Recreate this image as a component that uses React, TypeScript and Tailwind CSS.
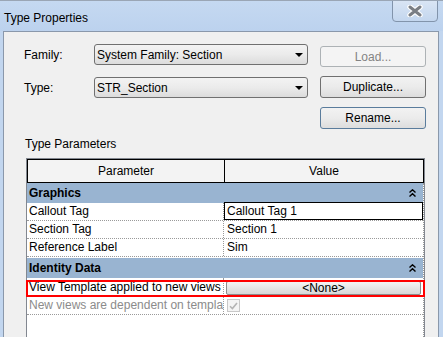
const font = "font-['Liberation_Sans',Arial,sans-serif]"

function Combo({ text }: { text: string }) {
  return (
    <div className="flex h-[21px] w-[214px] items-center justify-between rounded-[3px] border border-[#707070] bg-gradient-to-b from-[#f3f3f3] via-[#ebebeb] to-[#dcdcdc] pl-[2px] pr-[4px] text-[12px] text-black">
      <span>{text}</span>
      <svg width="8" height="4" viewBox="0 0 8 4">
        <path d="M0 0h8L4 4z" fill="#000" />
      </svg>
    </div>
  )
}

function Btn({ label, disabled, focus }: { label: string; disabled?: boolean; focus?: boolean }) {
  if (disabled) {
    return (
      <div className="flex h-[21px] w-[106px] items-center justify-center rounded-[3px] border border-[#adb2b5] bg-[#f4f4f4] text-[12px] text-[#838383]">
        {label}
      </div>
    )
  }
  return (
    <div
      className={
        "flex h-[22px] w-[106px] items-center justify-center rounded-[3px] border bg-gradient-to-b from-[#f2f2f2] via-[#ebebeb] to-[#dddddd] text-[12px] text-black " +
        (focus ? "border-[#5a7c9c]" : "border-[#707070]")
      }
    >
      {label}
    </div>
  )
}

function Chevrons() {
  return (
    <svg width="7" height="8" viewBox="0 0 7 8" className="mr-[7px]">
      <path d="M0.5 3.5L3.5 0.8L6.5 3.5M0.5 7.5L3.5 4.8L6.5 7.5" stroke="#000" strokeWidth="1.4" fill="none" />
    </svg>
  )
}

function Group({ label }: { label: string }) {
  return (
    <div className="flex h-[20px] items-center justify-between bg-[#99b4d1] pl-[2px] text-[12px] font-bold text-black">
      <span>{label}</span>
      <Chevrons />
    </div>
  )
}

function Row({ name, value, selected }: { name: string; value: string; selected?: boolean }) {
  return (
    <div className="flex h-[18px] border-b border-dotted border-[#9a9a9a] text-[12px] text-black">
      <div className="w-[197px] overflow-hidden whitespace-nowrap border-r border-dotted border-[#9a9a9a] pl-[2px] leading-[17px]">
        {name}
      </div>
      <div className="flex-1">
        {selected ? (
          <div className="-mt-[1px] h-[18px] border border-black pl-[2px] leading-[16px]">{value}</div>
        ) : (
          <div className="pl-[3px] leading-[17px]">{value}</div>
        )}
      </div>
    </div>
  )
}

export default function App() {
  return (
    <div className={`${font} flex h-[337px] w-[443px] flex-col overflow-hidden border-t border-[#9aa6b5] bg-[#c2d6ef]`}>
      {/* title bar */}
      <div className="relative flex h-[30px] shrink-0 items-center bg-gradient-to-b from-[#c5d9f1] to-[#bcd2ee] pl-[4px] text-[12px] text-black">
        <span className="mt-[4px]">Type Properties</span>
        <div className="absolute right-[5px] -top-[1px] flex h-[22px] w-[46px] items-center justify-center rounded-b-[4px] border border-[#8294ab] bg-gradient-to-b from-[#d9e5f4] to-[#c3d6ee]">
          <svg width="16" height="12" viewBox="0 0 16 12">
            <path d="M3 2L13 10M13 2L3 10" stroke="#ffffff" strokeWidth="5.4" strokeLinecap="round" />
            <path d="M3 2L13 10M13 2L3 10" stroke="#7a7e84" strokeWidth="3" strokeLinecap="round" />
          </svg>
        </div>
      </div>

      {/* client area */}
      <div className="ml-[3px] mr-[4px] flex-1 border border-[#8a98ab] bg-[#f0f0f0]">
        <div className="flex">
          <div className="flex flex-col pl-[20px] pt-[12px]">
            <div className="flex items-center">
              <span className="w-[70px] text-[12px] text-black">Family:</span>
              <Combo text="System Family: Section" />
            </div>
            <div className="mt-[12px] flex items-center">
              <span className="w-[70px] text-[12px] text-black">Type:</span>
              <Combo text="STR_Section" />
            </div>
          </div>
          <div className="ml-[12px] flex flex-col pt-[14px]">
            <Btn label="Load..." disabled />
            <div className="mt-[9px]">
              <Btn label="Duplicate..." />
            </div>
            <div className="mt-[9px]">
              <Btn label="Rename..." focus />
            </div>
          </div>
        </div>

        <div className="mt-[6px] pl-[21px] text-[12px] text-black">Type Parameters</div>

        {/* parameter grid */}
        <div className="ml-[22px] mt-[5px] h-[200px] w-[399px] border border-[#828790] bg-white">
          <div className="flex h-[24px] border border-black bg-[#f3f3f3] text-[12px] text-black">
            <div className="flex w-[197px] items-center justify-center border-r border-black">Parameter</div>
            <div className="flex flex-1 items-center justify-center">Value</div>
          </div>
          <div className="h-full border-r border-dotted border-[#9a9a9a]">
            <Group label="Graphics" />
            <Row name="Callout Tag" value="Callout Tag 1" selected />
            <Row name="Section Tag" value="Section 1" />
            <Row name="Reference Label" value="Sim" />
            <div className="h-[1px]" />
            <Group label="Identity Data" />
            <div className="relative flex h-[19px] border-b border-dotted border-[#9a9a9a] text-[12px] text-black">
              <div className="w-[197px] overflow-hidden whitespace-nowrap border-r border-dotted border-[#9a9a9a] pl-[2px] pt-[1px] leading-[17px]">
                View Template applied to new views
              </div>
              <div className="flex-1 px-[2px] pt-[3px]">
                <div className="flex h-[14px] items-center justify-center rounded-[2px] border border-[#8c8c8c] bg-gradient-to-b from-[#f4f4f4] to-[#d8d8d8] text-[12px] leading-[12px]">
                  &lt;None&gt;
                </div>
              </div>
              <div className="absolute -left-[1px] -right-[2px] top-[2px] h-[17px] border-2 border-[#ff0000]" />
            </div>
            <div className="flex h-[18px] border-b border-dotted border-[#9a9a9a] text-[12px]">
              <div className="w-[197px] whitespace-nowrap border-r border-dotted border-[#9a9a9a] pl-[2px] leading-[17px] text-[#8b8b8b]">
                New views are dependent on templa
              </div>
              <div className="flex flex-1 items-center pl-[3px]">
                <div className="flex h-[13px] w-[13px] items-center justify-center border border-[#c8c8c8] bg-[#f4f4f4]">
                  <svg width="9" height="8" viewBox="0 0 9 8">
                    <path d="M1 4.2L3.4 6.6L8 1" stroke="#b4b4b4" strokeWidth="1.6" fill="none" />
                  </svg>
                </div>
              </div>
            </div>
          </div>
        </div>
      </div>
    </div>
  )
}
